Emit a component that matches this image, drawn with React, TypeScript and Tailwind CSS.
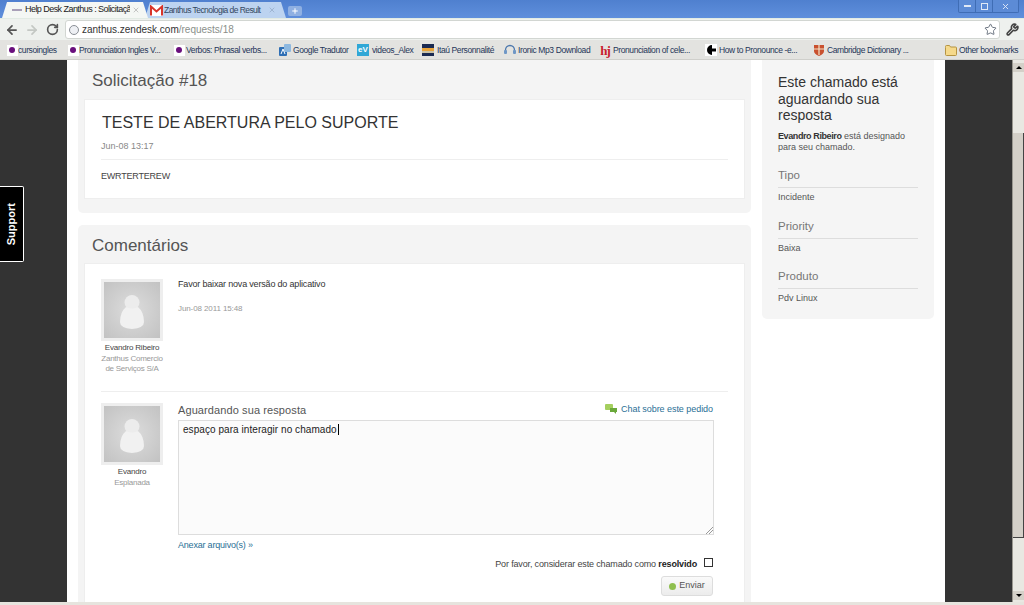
import { ArrowLeft, ArrowRight, Plus, RotateCw, Star, Wrench, X } from "lucide-react";

function Dot() {
  return (
    <span className="flex h-[11px] w-[11px] items-center justify-center bg-white">
      <span className="h-[6px] w-[6px] rounded-full bg-[#6a0f7d]" />
    </span>
  );
}

function GmailIcon() {
  return (
    <svg width="13" height="11" viewBox="0 0 13 11" className="shrink-0">
      <rect width="13" height="11" fill="#fff" />
      <path d="M1 10.500V1.500l5.500 5 5.500-5v9" fill="none" stroke="#d8352a" strokeWidth="2" />
    </svg>
  );
}

function TranslateIcon() {
  return (
    <svg width="12" height="12" viewBox="0 0 12 12">
      <rect x="0" y="3" width="8" height="9" rx="1" fill="#2f6fb5" />
      <rect x="5" y="0" width="7" height="8" rx="1" fill="#8db8e0" />
      <path d="M2 10l2-5 2 5" fill="none" stroke="#fff" strokeWidth="1" />
    </svg>
  );
}

function VideosIcon() {
  return (
    <span className="flex h-[12px] w-[12px] items-center justify-center bg-[#31a7d6] text-[8px] font-bold leading-none text-white">
      eV
    </span>
  );
}

function ItauIcon() {
  return (
    <svg width="12" height="12" viewBox="0 0 12 12">
      <rect width="12" height="12" fill="#1a2a52" />
      <rect y="4" width="12" height="3" fill="#e8a33a" />
      <rect y="7" width="12" height="2" fill="#c9c2a8" />
    </svg>
  );
}

function IronicIcon() {
  return (
    <svg width="12" height="12" viewBox="0 0 12 12">
      <path d="M1.500 7.500V6a4.500 4.500 0 0 1 9 0v1.500" fill="none" stroke="#4c78ad" strokeWidth="1.300" />
      <rect x="0" y="6" width="3" height="4" rx="1" fill="#6f97c6" />
      <rect x="9" y="6" width="3" height="4" rx="1" fill="#6f97c6" />
    </svg>
  );
}

function HjIcon() {
  return <span className="text-[13px] font-bold leading-none tracking-[-1px] text-[#c8202c] [font-family:'Liberation_Serif',serif]">hj</span>;
}

function PacIcon() {
  return (
    <svg width="12" height="12" viewBox="0 0 12 12">
      <rect width="12" height="12" fill="#fff" />
      <path d="M7 1a5 5 0 1 0 0 10V7.500h4v-3H7z" fill="#000" />
    </svg>
  );
}

function ShieldIcon() {
  return (
    <svg width="12" height="12" viewBox="0 0 12 12">
      <path d="M1 1h10v6q0 3-5 5-5-2-5-5z" fill="#c9512f" />
      <path d="M6 1v10M1 5h10" stroke="#f1e3c9" strokeWidth="1.200" />
    </svg>
  );
}

function FolderIcon() {
  return (
    <svg width="12" height="11" viewBox="0 0 12 11">
      <path d="M.5 2.500V1.500a1 1 0 0 1 1-1h3l1 1.500h5a1 1 0 0 1 1 1v6.500a1 1 0 0 1-1 1h-9a1 1 0 0 1-1-1z" fill="#f5d98b" stroke="#b59442" />
    </svg>
  );
}

function Bookmark({ icon, label, className }: { icon: React.ReactNode; label: string; className: string }) {
  return (
    <div className={`flex shrink-0 items-center ${className}`}>
      <span className="flex w-[12px] shrink-0 items-center justify-center">{icon}</span>
      <span className="whitespace-nowrap text-[8.500px] tracking-[-0.4px] text-[#253659]">{label}</span>
    </div>
  );
}

function BrowserChrome() {
  return (
    <div className="shrink-0">
      <div className="flex h-[18px] items-end bg-gradient-to-b from-[#4f80cf] to-[#5f8fdc] pl-[2px]">
        <div className="z-10 flex h-[16px] w-[146px] items-center bg-[#f4f7f4] pl-[10px] pr-[8px] [clip-path:polygon(0_100%,5px_0,calc(100%-5px)_0,100%_100%)]">
          <span className="mr-[3px] h-[2px] w-[10px] shrink-0 bg-[#a9a0b8]" />
          <span className="min-w-0 flex-1 overflow-hidden whitespace-nowrap text-[9px] tracking-[-0.55px] text-[#222]">Help Desk Zanthus : Solicitaçã</span>
          <X size={8} strokeWidth={2} className="ml-[2px] shrink-0 text-[#aaa]" />
        </div>
        <div className="-ml-[3px] flex h-[16px] w-[141px] items-center bg-[#bcd3f0] pl-[5px] pr-[10px] [clip-path:polygon(0_100%,5px_0,calc(100%-5px)_0,100%_100%)]">
          <GmailIcon />
          <span className="ml-[1px] min-w-0 flex-1 overflow-hidden whitespace-nowrap text-[8.500px] tracking-[-0.55px] text-[#33475f]">Zanthus Tecnologia de Result</span>
          <X size={8} strokeWidth={2} className="ml-[3px] shrink-0 text-[#8fa6c2]" />
        </div>
        <div className="mb-[2px] ml-[2px] flex h-[10px] w-[14px] items-center justify-center rounded-[2px] bg-[#8fb0e2]">
          <Plus size={8} strokeWidth={3} className="text-white" />
        </div>
        <div className="mb-[5px] ml-auto mr-[5px] flex h-[13px] self-start rounded-b-[2px] border border-t-0 border-[#3f6db5] bg-[#5c8bd6]">
          <span className="flex w-[17px] items-center justify-center border-r border-[#3f6db5]">
            <span className="h-[2px] w-[7px] bg-[#dfe8f6]" />
          </span>
          <span className="flex w-[17px] items-center justify-center border-r border-[#3f6db5]">
            <span className="h-[7px] w-[7px] border border-[#dfe8f6]" />
          </span>
          <span className="flex w-[25px] items-center justify-center">
            <X size={9} strokeWidth={2.500} className="text-[#dfe8f6]" />
          </span>
        </div>
      </div>
      <div className="flex h-[22px] items-center border-t border-[#e2ebe4] bg-[#eef1ee] pl-[5px] pr-[5px]">
        <ArrowLeft size={14} strokeWidth={3} className="text-[#555]" />
        <ArrowRight size={14} strokeWidth={3} className="ml-[6px] text-[#c4c8c4]" />
        <RotateCw size={13} strokeWidth={3} className="ml-[7px] text-[#555]" />
        <div className="ml-[6px] mr-[1px] flex h-[19px] flex-1 items-center rounded-[3px] border border-[#d2d6d2] bg-white pl-[3px] pr-[2px]">
          <span className="mr-[3px] h-[10px] w-[10px] rounded-full border border-[#8a8f96] bg-[#eef0f4]" />
          <span className="text-[10px] text-[#333]">zanthus.zendesk.com</span>
          <span className="text-[10px] text-[#8a8f8a]">/requests/18</span>
          <Star size={13} strokeWidth={1.600} className="ml-auto text-[#56606e]" />
        </div>
        <Wrench size={13} strokeWidth={3} className="ml-[5px] text-[#444]" />
      </div>
      <div className="flex h-[20px] items-center border-b border-[#cfcfcb] bg-[#e3e3e0] pl-[6px] pr-[6px] pt-[1px]">
        <Bookmark icon={<Dot />} label="cursoingles" className="w-[61px]" />
        <Bookmark icon={<Dot />} label="Pronunciation Ingles V..." className="w-[106px]" />
        <Bookmark icon={<Dot />} label="Verbos: Phrasal verbs..." className="w-[106px] gap-[1px]" />
        <Bookmark icon={<TranslateIcon />} label="Google Tradutor" className="w-[78px] gap-[2px]" />
        <Bookmark icon={<VideosIcon />} label="videos_Alex" className="w-[65px] gap-[3px]" />
        <Bookmark icon={<ItauIcon />} label="Itaú Personnalité" className="w-[82px] gap-[3px]" />
        <Bookmark icon={<IronicIcon />} label="Ironic Mp3 Download" className="w-[95px] gap-[2px]" />
        <Bookmark icon={<HjIcon />} label="Pronunciation of cele..." className="w-[106px] gap-[2px]" />
        <Bookmark icon={<PacIcon />} label="How to Pronounce -e..." className="w-[108px] gap-[2px]" />
        <Bookmark icon={<ShieldIcon />} label="Cambridge Dictionary ..." className="w-[132px] gap-[2px]" />
        <Bookmark icon={<FolderIcon />} label="Other bookmarks" className="w-[73px] gap-[2px]" />
      </div>
    </div>
  );
}

function Avatar() {
  return (
    <div className="h-[62px] w-[62px] border-[3px] border-[#eeeeee] bg-white">
      <div className="flex h-full w-full flex-col items-center justify-end bg-[radial-gradient(circle,#dddddd,#c2c2c2)] pb-[9px]">
        <svg width="24" height="34" viewBox="0 0 24 34">
          <circle cx="12" cy="7.500" r="7.500" fill="#ececec" />
          <path d="M6 12q-6 5-6 15 0 6 12 7 12-1 12-7 0-10-6-15-6 3-12 0z" fill="#f1f1f1" />
        </svg>
      </div>
    </div>
  );
}

function SideField({ title, value }: { title: string; value: string }) {
  return (
    <div className="mt-[14.500px]">
      <div className="border-b border-[#dddddd] pb-[4px] text-[11.500px] leading-[16px] text-[#777]">{title}</div>
      <div className="mt-[3px] text-[9px] leading-[12px] text-[#555]">{value}</div>
    </div>
  );
}

function PersonCard({ name, lines }: { name: string; lines: string[] }) {
  return (
    <div className="flex w-[62px] flex-col items-center">
      <Avatar />
      <div className="mt-[2px] whitespace-nowrap text-center text-[8px] leading-[10px] tracking-[-0.2px] text-[#444]">{name}</div>
      {lines.map((line) => (
        <div key={line} className="mt-[0.500px] whitespace-nowrap text-center text-[8px] leading-[10px] tracking-[-0.25px] text-[#999]">
          {line}
        </div>
      ))}
    </div>
  );
}

export default function App() {
  return (
    <div className="relative flex h-[605px] w-[1024px] flex-col overflow-hidden bg-[#e6e4de] [font-family:'Liberation_Sans',Arial,sans-serif]">
      <BrowserChrome />

      <div className="flex h-[542px] overflow-hidden">
        <div className="w-[67px] shrink-0 bg-[#333333]" />

        <main className="flex w-[878px] shrink-0 items-start gap-[11px] bg-white pl-[11px]">
          <div className="w-[673px] shrink-0">
            <section className="h-[153px] rounded-b-[5px] bg-[#f4f4f4] px-[6px]">
              <h1 className="h-[39px] pl-[8px] pt-[11px] text-[17px] leading-[20px] text-[#555]">Solicitação #18</h1>
              <div className="h-[100px] border border-[#eeeeee] bg-white px-[16px] pt-[13px]">
                <h2 className="pl-[1px] text-[16px] leading-[20px] text-[#333]">TESTE DE ABERTURA PELO SUPORTE</h2>
                <div className="mt-[7px] border-b border-[#eeeeee] pb-[7px] text-[9px] leading-[12px] text-[#888]">Jun-08 13:17</div>
                <p className="mt-[10px] text-[9px] leading-[12px] tracking-[-0.2px] text-[#444]">EWRTERTEREW</p>
              </div>
            </section>

            <section className="mt-[12px] h-[400px] rounded-t-[5px] bg-[#f4f4f4] px-[6px]">
              <h2 className="h-[38px] pl-[8px] pt-[11px] text-[17px] leading-[20px] text-[#555]">Comentários</h2>
              <div className="h-[400px] border border-[#eeeeee] bg-white px-[16px]">
                <div className="flex h-[128px] gap-[15px] border-b border-[#eeeeee] pt-[15px]">
                  <PersonCard name="Evandro Ribeiro" lines={["Zanthus Comercio", "de Serviços S/A"]} />
                  <div className="-mt-[1px]">
                    <p className="text-[9px] leading-[12px] tracking-[-0.18px] text-[#333]">Favor baixar nova versão do aplicativo</p>
                    <p className="mt-[13px] text-[8px] leading-[12px] tracking-[-0.1px] text-[#999]">Jun-08 2011 15:48</p>
                  </div>
                </div>

                <div className="flex gap-[15px] pt-[11px]">
                  <PersonCard name="Evandro" lines={["Esplanada"]} />
                  <div className="w-[536px]">
                    <div className="flex h-[17px] items-start justify-between">
                      <span className="text-[11px] leading-[14px] tracking-[0.1px] text-[#555]">Aguardando sua resposta</span>
                      <span className="flex items-center gap-[4px] pr-[1px] text-[9px] leading-[12px] tracking-[-0.05px] text-[#2a6f96]">
                        <svg width="12" height="10" viewBox="0 0 12 10">
                          <rect width="8" height="6" rx="1" fill="#a5cf5f" />
                          <path d="M5 4h7v4h-1v2l-2-2H5z" fill="#6aa83a" />
                        </svg>
                        Chat sobre este pedido
                      </span>
                    </div>
                    <div className="relative h-[115px] border border-[#dddddd] bg-[#fbfbfb] pl-[4px] pt-[2px] text-[10px] leading-[13px] tracking-[0.06px] text-[#222]">
                      espaço para interagir no chamado
                      <span className="ml-[1px] inline-block h-[11px] w-px bg-black align-[-2px]" />
                      <svg width="8" height="8" viewBox="0 0 8 8" className="absolute bottom-0 right-0">
                        <path d="M1 8l7-7M4 8l4-4" stroke="#999" strokeWidth="1" />
                      </svg>
                    </div>
                    <div className="mt-[4px] text-[9px] leading-[12px] tracking-[-0.2px] text-[#2a6f96]">Anexar arquivo(s) »</div>
                    <div className="mt-[8px] flex h-[12px] items-center justify-end text-[9px] tracking-[-0.15px] text-[#444]">
                      Por favor, considerar este chamado como&nbsp;<b className="text-[#222]">resolvido</b>
                      <span className="mb-[5px] ml-[7px] mr-[1px] h-[9px] w-[9px] border border-[#333] bg-white" />
                    </div>
                    <div className="mr-[1px] mt-[5px] flex justify-end">
                      <button className="flex h-[20px] w-[52px] items-center justify-center gap-[3px] rounded-[3px] border border-[#dddddd] bg-gradient-to-b from-[#fafafa] to-[#ececec] text-[9px] text-[#555]">
                        <span className="h-[7px] w-[7px] rounded-full bg-[#8fbf4f]" />
                        Enviar
                      </button>
                    </div>
                  </div>
                </div>
              </div>
            </section>
          </div>

          <aside className="h-[259px] w-[172px] shrink-0 rounded-b-[5px] bg-[#f5f5f5] px-[16px] pt-[14px]">
            <h3 className="text-[14px] leading-[16.500px] text-[#333]">Este chamado está aguardando sua resposta</h3>
            <p className="mt-[7px] text-[9px] leading-[11px] text-[#555]">
              <b className="tracking-[-0.4px] text-[#333]">Evandro Ribeiro</b> está designado para seu chamado.
            </p>
            <SideField title="Tipo" value="Incidente" />
            <SideField title="Priority" value="Baixa" />
            <SideField title="Produto" value="Pdv Linux" />
          </aside>
        </main>

        <div className="w-[67px] shrink-0 bg-[#333333]" />

        <div className="flex w-[12px] shrink-0 flex-col border-l border-[#9a9890] bg-[#e9e8e2]">
          <div className="mt-[3px] flex h-[9px] items-center justify-center bg-[#d4d0c8]">
            <span className="h-0 w-0 border-x-[3px] border-b-[3px] border-x-transparent border-b-black" />
          </div>
          <div className="mt-[61px] h-[405px] shrink-0 border-r border-b border-[#444] bg-[#d4d0c8]" />
          <div className="mb-[2px] mt-auto flex h-[9px] items-center justify-center bg-[#d4d0c8]">
            <span className="h-0 w-0 border-x-[3px] border-t-[3px] border-x-transparent border-t-black" />
          </div>
        </div>
      </div>

      <div className="absolute left-0 top-[186px] flex h-[76px] w-[24px] items-center justify-center rounded-r-[2px] border-y border-r border-white bg-black">
        <span className="-rotate-90 text-[11px] font-bold text-white">Support</span>
      </div>
    </div>
  );
}
